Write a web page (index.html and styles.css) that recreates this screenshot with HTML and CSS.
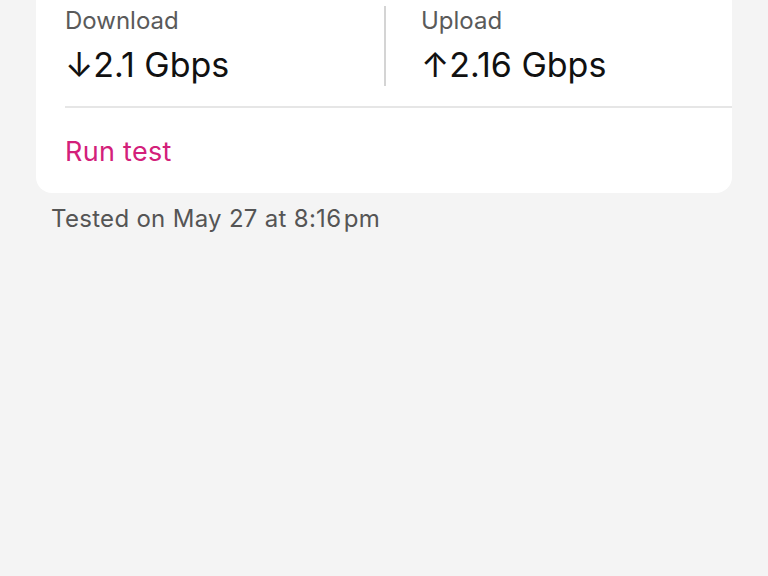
FILE: index.html
```html
<!DOCTYPE html>
<html lang="en">

<head>
    <meta charset="UTF-8">
    <meta name="viewport" content="width=device-width, initial-scale=1.0">
    <title>Speed test</title>
    <link rel="stylesheet" href="styles.css">
</head>

<body>
    <div class="page">
        <div class="card">
            <div class="speed-row">
                <div class="speed speed-download">
                    <div class="speed-label">Download</div>
                    <div class="speed-value">↓2.1 Gbps</div>
                </div>
                <div class="speed speed-upload">
                    <div class="speed-label">Upload</div>
                    <div class="speed-value">↑2.16 Gbps</div>
                </div>
            </div>
            <div class="card-action">
                <a href="#" class="run-test">Run test</a>
            </div>
        </div>
        <p class="tested-on">Tested on May 27 at 8:16&#8202;pm</p>
    </div>
</body>

</html>
```

FILE: styles.css
```css
body {
    margin: 0;
    background-color: #f4f4f4;
    font-family: Inter, "Noto Sans", sans-serif;
}

.page {
    padding: 0 36px;
}

.card {
    margin-top: -20px;
    background-color: #ffffff;
    border-radius: 16px;
    padding-left: 29px;
}

.speed-row {
    display: flex;
    padding-top: 26px;
    padding-bottom: 20px;
    border-bottom: 2px solid #e6e6e6;
}

.speed-download {
    width: 319px;
    flex-shrink: 0;
}

.speed-upload {
    flex: 1;
    border-left: 2px solid #d4d4d4;
    padding-left: 35px;
}

.speed-label {
    font-size: 24px;
    line-height: 30px;
    color: #5a5a5a;
}

.speed-value {
    margin-top: 8px;
    font-size: 34px;
    line-height: 42px;
    color: #111111;
}

.card-action {
    padding: 26px 0 23px;
}

.run-test {
    font-size: 27px;
    line-height: 36px;
    letter-spacing: 0.3px;
    color: #d3207a;
    text-decoration: none;
    display: inline-block;
}

.tested-on {
    margin: 10px 0 0 15px;
    font-size: 24px;
    line-height: 32px;
    letter-spacing: 0.3px;
    color: #555555;
}
```
